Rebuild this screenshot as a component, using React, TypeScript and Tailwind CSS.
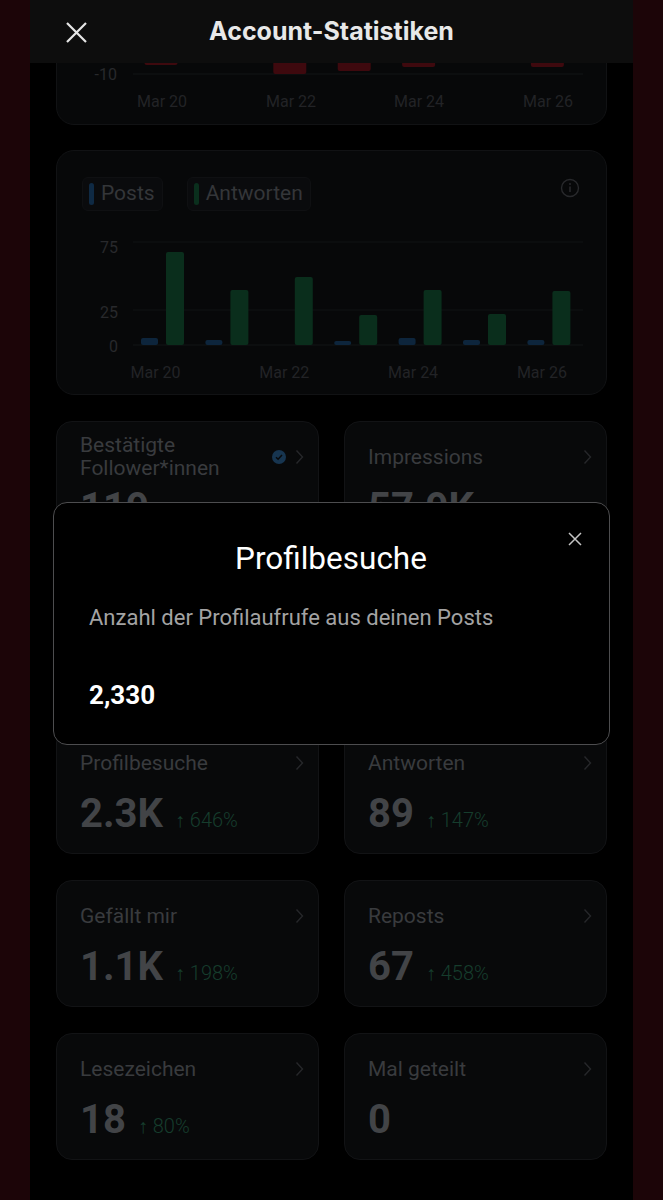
import React from 'react';

type Stat = {
  label?: React.ReactNode;
  value?: string;
  pct?: string;
  verified?: boolean;
};

// second row sits entirely under the dialog, so its cards stay empty
const STATS: Stat[] = [
  { label: <>Bestätigte<br />Follower*innen</>, value: '119', verified: true },
  { label: 'Impressions', value: '57.9K' },
  {},
  {},
  { label: 'Profilbesuche', value: '2.3K', pct: '↑ 646%' },
  { label: 'Antworten', value: '89', pct: '↑ 147%' },
  { label: 'Gefällt mir', value: '1.1K', pct: '↑ 198%' },
  { label: 'Reposts', value: '67', pct: '↑ 458%' },
  { label: 'Lesezeichen', value: '18', pct: '↑ 80%' },
  { label: 'Mal geteilt', value: '0' },
];

// group centers, card-local x
const centers = [0, 1, 2, 3, 4, 5, 6].map((i) => 105.5 + 64.4 * i);
const greenH = [93, 55, 68, 30, 55, 31, 54];
const blueH = [7, 5, 0, 4, 7, 5, 5];
const redBars = [
  { i: 0, up: false, h: 25 },
  { i: 1, up: true, h: 14 },
  { i: 2, up: false, h: 34 },
  { i: 3, up: false, h: 31 },
  { i: 4, up: false, h: 27 },
  { i: 5, up: true, h: 9 },
  { i: 6, up: false, h: 27 },
];

function Chevron() {
  return (
    <svg width="9" height="16" viewBox="0 0 9 16" fill="none">
      <path d="M1.5 1.5L7.5 8L1.5 14.5" stroke="#26272a" strokeWidth="1.4" />
    </svg>
  );
}

function StatCard({ s }: { s: Stat }) {
  return (
    <div className="h-[127px] rounded-[16px] border border-[#121315] bg-[#08090a] pl-[23px] pr-[14px] pt-3">
      <div className="flex h-[46px] items-center justify-between">
        <div className="text-[21px] leading-[23px] text-[#393b3e]">{s.label}</div>
        <div className="flex items-center gap-[9px]">
          {s.verified && (
            <svg width="14" height="14" viewBox="0 0 14 14">
              <circle cx="7" cy="7" r="7" fill="#173550" />
              <path d="M4 7.2L6.1 9.2L10 5" stroke="#08090a" strokeWidth="1.5" fill="none" />
            </svg>
          )}
          <Chevron />
        </div>
      </div>
      <div className="mt-2 flex items-baseline gap-[12px]">
        <span className="text-[40px] font-bold leading-none text-[#424447]">{s.value}</span>
        {s.pct && <span className="text-[20px] font-light text-[#163d2d]">{s.pct}</span>}
      </div>
    </div>
  );
}

function LegendChip({ color, text }: { color: string; text: string }) {
  return (
    <div className="flex h-[34px] items-center rounded-md border border-[#0f1012] bg-[#0a0b0d] pl-[6px] pr-[7px]">
      <span className={`h-[22px] w-[5px] rounded-full ${color}`} />
      <span className="ml-[7px] text-[21px] text-[#343639]">{text}</span>
    </div>
  );
}

function TopChartCard() {
  return (
    <div className="relative h-[245px] shrink-0 overflow-hidden rounded-[18px] border border-[#111214] bg-[#070809]">
      <svg className="absolute left-0 top-[75px]" width="551" height="170">
        <line x1="76" x2="526" y1="50" y2="50" stroke="#111214" />
        <line x1="76" x2="526" y1="84" y2="84" stroke="#111214" />
        <line x1="76" x2="526" y1="118" y2="118" stroke="#131416" />
        <g fill="#28292c" fontSize="16" textAnchor="end" fontFamily="Roboto, sans-serif">
          <text x="60" y="124">-10</text>
        </g>
        {redBars.map((b) => (
          <rect
            key={b.i}
            x={centers[b.i] - 18}
            y={b.up ? 84 - b.h : 84}
            width="33"
            height={b.h}
            rx="2"
            fill={b.up ? '#0a2e1c' : '#3e090e'}
          />
        ))}
        <g fill="#222326" fontSize="16" textAnchor="middle" fontFamily="Roboto, sans-serif">
          <text x="105" y="151">Mar 20</text>
          <text x="234" y="151">Mar 22</text>
          <text x="362" y="151">Mar 24</text>
          <text x="491" y="151">Mar 26</text>
        </g>
      </svg>
    </div>
  );
}

function PostsChartCard() {
  return (
    <div className="relative h-[245px] shrink-0 rounded-[18px] border border-[#111214] bg-[#070809]">
      <div className="flex items-start justify-between px-[25px] pt-[26px]">
        <div className="flex gap-[24px]">
          <LegendChip color="bg-[#0f2a44]" text="Posts" />
          <LegendChip color="bg-[#0a2f1d]" text="Antworten" />
        </div>
        <svg className="mr-[1px] mt-[1px]" width="20" height="20" viewBox="0 0 20 20" fill="none">
          <circle cx="10" cy="10" r="8.5" stroke="#28292c" strokeWidth="1.4" />
          <line x1="10" y1="8.5" x2="10" y2="14" stroke="#28292c" strokeWidth="1.6" />
          <circle cx="10" cy="6" r="1" fill="#28292c" />
        </svg>
      </div>
      <svg className="absolute left-0 top-[75px]" width="551" height="170">
        <line x1="76" x2="526" y1="16" y2="16" stroke="#111214" />
        <line x1="76" x2="526" y1="84" y2="84" stroke="#111214" />
        <line x1="76" x2="526" y1="119" y2="119" stroke="#131416" />
        <g fill="#28292c" fontSize="16" textAnchor="end" fontFamily="Roboto, sans-serif">
          <text x="61" y="27">75</text>
          <text x="61" y="92">25</text>
          <text x="61" y="126">0</text>
        </g>
        {centers.map((c, i) => (
          <g key={i}>
            {blueH[i] > 0 && (
              <rect x={c - 21.5} y={119 - blueH[i]} width="17" height={blueH[i]} rx="2" fill="#0d253c" />
            )}
            <rect x={c + 3.5} y={119 - greenH[i]} width="18" height={greenH[i]} rx="2" fill="#0a2e1c" />
          </g>
        ))}
        <g fill="#222326" fontSize="16" textAnchor="middle" fontFamily="Roboto, sans-serif">
          <text x={centers[0] - 7} y="152">Mar 20</text>
          <text x={centers[2] - 7} y="152">Mar 22</text>
          <text x={centers[4] - 7} y="152">Mar 24</text>
          <text x={centers[6] - 7} y="152">Mar 26</text>
        </g>
      </svg>
    </div>
  );
}

export default function App() {
  return (
    <div className="flex h-[1200px] w-[663px] overflow-hidden bg-[#1c0508] font-[Roboto,sans-serif]">
      <div className="relative mx-[30px] w-[603px] overflow-hidden bg-black">
        {/* header sits over the scrolled content */}
        <div className="absolute inset-x-0 top-0 z-10 flex h-[63px] items-center justify-center bg-[#0d0d0d] pt-[1px]">
          <svg className="absolute left-[35px] top-[21px]" width="23" height="23" viewBox="0 0 23 23" fill="none">
            <path d="M2 2L21 21M21 2L2 21" stroke="#e6e6e6" strokeWidth="2.2" />
          </svg>
          <h1 className="font-[Inter,sans-serif] text-[25px] font-bold text-[#e8e8e8]">Account-Statistiken</h1>
        </div>

        <div className="-mt-[120px] flex flex-col px-[26px]">
          <TopChartCard />
          <div className="mt-[25px]">
            <PostsChartCard />
          </div>
          <div className="mt-[26px] grid grid-cols-2 gap-x-[25px] gap-y-[26px]">
            {STATS.map((s, i) => (
              <StatCard key={i} s={s} />
            ))}
          </div>
        </div>

        {/* modal */}
        <div className="absolute left-[23px] top-[502px] z-20 h-[243px] w-[557px] rounded-[14px] border border-[#4d4d4f] bg-black pl-[35px] pr-9 pt-[38px]">
          <svg className="absolute left-[514px] top-[29px]" width="14" height="14" viewBox="0 0 14 14" fill="none">
            <path d="M1 1L13 13M13 1L1 13" stroke="#c4c4c4" strokeWidth="1.5" />
          </svg>
          <h2 className="text-center text-[31.5px] leading-[36px] text-white">Profilbesuche</h2>
          <p className="mt-[27px] text-[22px] leading-[28px] text-[#a3a3a3]">Anzahl der Profilaufrufe aus deinen Posts</p>
          <p className="mt-[48px] text-[26px] font-bold leading-[30px] text-white">2,330</p>
        </div>
      </div>
    </div>
  );
}
